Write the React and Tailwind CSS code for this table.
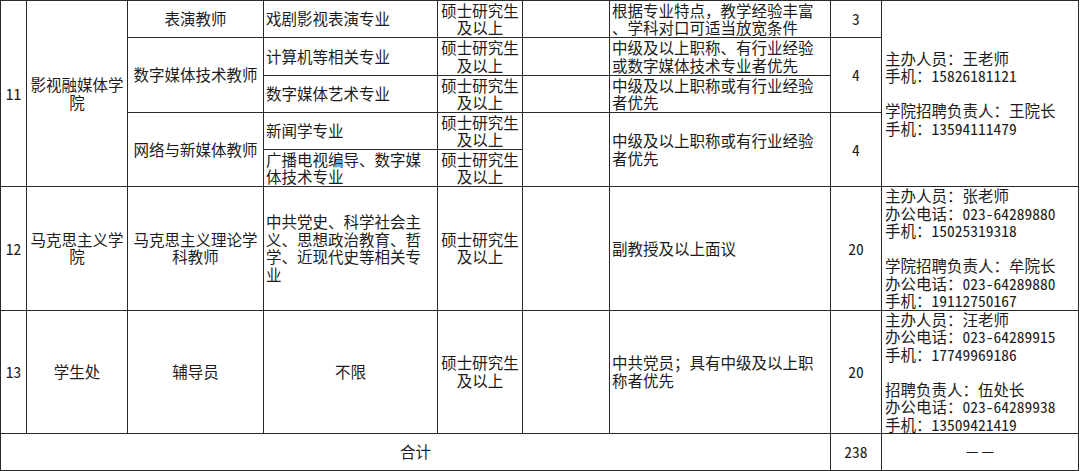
import React from "react";

const FONT = {
  fontFamily: '"Noto Sans Mono CJK SC", "Noto Sans CJK SC", sans-serif',
};

function Lines({ t }) {
  const parts = t.split("\n");
  return parts.map((p, i) => (
    <React.Fragment key={i}>
      {p === "" ? "\u00a0" : p}
      {i < parts.length - 1 && <br />}
    </React.Fragment>
  ));
}

function C({ children, className = "", ...rest }) {
  return (
    <td
      className={`border border-[#2a2a2a] px-[2px] py-0 align-middle overflow-hidden ${className}`}
      {...rest}
    >
      {typeof children === "string" ? <Lines t={children} /> : children}
    </td>
  );
}

const DEG = "硕士研究生\n及以上";

export default function App() {
  const widths = [26, 101, 136, 174, 85, 87, 221, 51, 197];
  return (
    <div className="w-[1080px] h-[471px] bg-white overflow-hidden">
      <table
        className="table-fixed border-collapse w-[1079px] text-[15.5px] leading-[17.5px] text-[#1c1c1c] whitespace-nowrap"
        style={FONT}
      >
        <colgroup>
          {widths.map((w, i) => (
            <col key={i} style={{ width: w }} />
          ))}
        </colgroup>
        <tbody>
          {/* Row 11 */}
          <tr className="h-[37px]">
            <C rowSpan={5} className="text-center">11</C>
            <C rowSpan={5} className="text-center">{"影视融媒体学\n院"}</C>
            <C className="text-center">表演教师</C>
            <C className="text-left">戏剧影视表演专业</C>
            <C className="text-center">{DEG}</C>
            <C></C>
            <C className="text-left">{"根据专业特点，教学经验丰富\n、学科对口可适当放宽条件"}</C>
            <C className="text-center">3</C>
            <C rowSpan={5} className="text-left !px-[3px]">
              {"主办人员：王老师\n手机：15826181121\n\n学院招聘负责人：王院长\n手机：13594111479"}
            </C>
          </tr>
          <tr className="h-[38px]">
            <C rowSpan={2} className="text-center">数字媒体技术教师</C>
            <C className="text-left">计算机等相关专业</C>
            <C className="text-center">{DEG}</C>
            <C></C>
            <C className="text-left">{"中级及以上职称、有行业经验\n或数字媒体技术专业者优先"}</C>
            <C rowSpan={2} className="text-center">4</C>
          </tr>
          <tr className="h-[37px]">
            <C className="text-left">数字媒体艺术专业</C>
            <C className="text-center">{DEG}</C>
            <C></C>
            <C className="text-left">{"中级及以上职称或有行业经验\n者优先"}</C>
          </tr>
          <tr className="h-[37px]">
            <C rowSpan={2} className="text-center">网络与新媒体教师</C>
            <C className="text-left">新闻学专业</C>
            <C className="text-center">{DEG}</C>
            <C rowSpan={2}></C>
            <C rowSpan={2} className="text-left">{"中级及以上职称或有行业经验\n者优先"}</C>
            <C rowSpan={2} className="text-center">4</C>
          </tr>
          <tr className="h-[37px]">
            <C className="text-left">{"广播电视编导、数字媒\n体技术专业"}</C>
            <C className="text-center">{DEG}</C>
          </tr>

          {/* Row 12 */}
          <tr className="h-[123px]">
            <C className="text-center">12</C>
            <C className="text-center">{"马克思主义学\n院"}</C>
            <C className="text-center">{"马克思主义理论学\n科教师"}</C>
            <C className="text-left">{"中共党史、科学社会主\n义、思想政治教育、哲\n学、近现代史等相关专\n业"}</C>
            <C className="text-center">{DEG}</C>
            <C></C>
            <C className="text-left">副教授及以上面议</C>
            <C className="text-center">20</C>
            <C className="text-left !px-[3px]">
              {"主办人员：张老师\n办公电话：023-64289880\n手机：15025319318\n\n学院招聘负责人：牟院长\n办公电话：023-64289880\n手机：19112750167"}
            </C>
          </tr>

          {/* Row 13 */}
          <tr className="h-[123px]">
            <C className="text-center">13</C>
            <C className="text-center">学生处</C>
            <C className="text-center">辅导员</C>
            <C className="text-center">不限</C>
            <C className="text-center">{DEG}</C>
            <C></C>
            <C className="text-left">{"中共党员；具有中级及以上职\n称者优先"}</C>
            <C className="text-center">20</C>
            <C className="text-left !px-[3px]">
              {"主办人员：汪老师\n办公电话：023-64289915\n手机：17749969186\n\n招聘负责人：伍处长\n办公电话：023-64289938\n手机：13509421419"}
            </C>
          </tr>

          {/* Total */}
          <tr className="h-[37px]">
            <C colSpan={7} className="text-center">合计</C>
            <C className="text-center">238</C>
            <C className="text-center">－－</C>
          </tr>
        </tbody>
      </table>
    </div>
  );
}
